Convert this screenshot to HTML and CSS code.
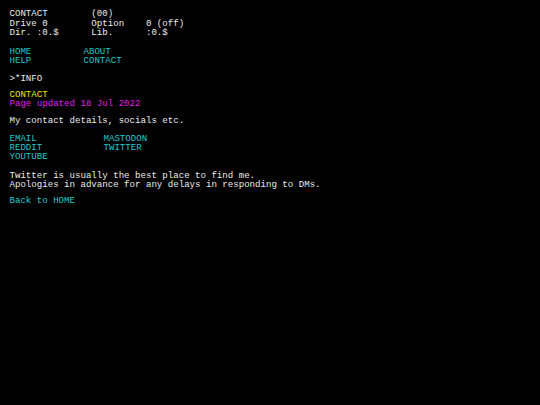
FILE: index.html
```html
<!DOCTYPE html>
<html>
<head>
<meta charset="utf-8">
<title>CONTACT</title>
<link rel="stylesheet" href="styles.css">
</head>
<body>
<div class="screen">
<pre class="status">CONTACT        (00)
Drive 0        Option    0 (off)
Dir. :0.$      Lib.      :0.$</pre>
<nav class="nav">
<a class="link" href="#">HOME</a><a class="link" href="#">ABOUT</a>
<a class="link" href="#">HELP</a><a class="link" href="#">CONTACT</a>
</nav>
<p class="prompt">&gt;*INFO</p>
<h1 class="title">CONTACT</h1>
<p class="updated">Page updated 18 Jul 2022</p>
<p class="intro">My contact details, socials etc.</p>
<div class="links">
<a class="link" href="#">EMAIL</a><a class="link" href="#">MASTODON</a>
<a class="link" href="#">REDDIT</a><a class="link" href="#">TWITTER</a>
<a class="link" href="#">YOUTUBE</a>
</div>
<p class="body">Twitter is usually the best place to find me.<br>Apologies in advance for any delays in responding to DMs.</p>
<p class="back"><a class="link" href="#">Back to HOME</a></p>
</div>
</body>
</html>
```
FILE: styles.css
```css
html, body {
  margin: 0;
  padding: 0;
  background: #000;
}
body {
  width: 540px;
  height: 405px;
  overflow: hidden;
  color: #ececec;
  font-family: "Liberation Mono", "DejaVu Sans Mono", monospace;
  font-size: 9.1px;
  line-height: 9px;
}
.screen {
  padding: 9.4px 0 0 9.5px;
}
.status {
  margin: 0;
  font: inherit;
  line-height: 9.5px;
  white-space: pre;
}
.nav {
  display: grid;
  grid-template-columns: 74px auto;
  margin-top: 9.5px;
}
.links {
  display: grid;
  grid-template-columns: 94px auto;
  margin-top: 9px;
}
.link {
  color: #22c8cc;
  text-decoration: none;
}
p, h1 {
  margin: 0;
  font: inherit;
}
.prompt {
  margin-top: 9px;
}
.title {
  margin-top: 7px;
  color: #e8e800;
}
.updated {
  color: #e020e0;
}
.intro {
  margin-top: 8px;
}
.body {
  margin-top: 10px;
}
.back {
  margin-top: 7px;
}
```
